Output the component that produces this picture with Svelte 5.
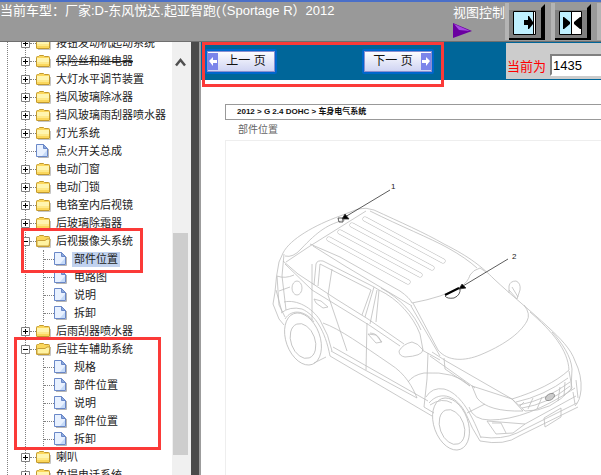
<script>
  let tree = $state([
    { name: "按钮发动机起动系统", folder: true },
    { name: "保险丝和继电器", folder: true, struck: true },
    { name: "大灯水平调节装置", folder: true },
    { name: "挡风玻璃除冰器", folder: true },
    { name: "挡风玻璃雨刮器喷水器", folder: true },
    { name: "灯光系统", folder: true },
    { name: "点火开关总成", folder: false },
    { name: "电动门窗", folder: true },
    { name: "电动门锁", folder: true },
    { name: "电铬室内后视镜", folder: true },
    { name: "后玻璃除霜器", folder: true },
    { name: "后视摄像头系统", folder: true, open: true, children: ["部件位置", "电路图", "说明", "拆卸"] },
    { name: "后雨刮器喷水器", folder: true },
    { name: "后驻车辅助系统", folder: true, open: true, children: ["规格", "部件位置", "说明", "部件位置", "拆卸"] },
    { name: "喇叭", folder: true },
    { name: "免提电话系统", folder: true },
  ]);

  let selected = $state("11-0");
  let page = $state("1435");

  // roof grooves: x1, y1, x2, y2
  const grooves = [
    [365, 219, 443, 261],
    [352, 225, 432, 268],
    [340, 232, 420, 275],
    [329, 239, 408, 282],
  ];

  function toggle(item) {
    item.open = !item.open;
  }

  function go(step) {
    page = String(Number(page) + step);
  }
</script>

{#snippet folderIcon(open)}
  <svg class="icon" width="15" height="14" viewBox="0 0 15 14" aria-hidden="true">
    <path d="M2 13.500h12.500V5" fill="none" stroke="#c4c4c4" />
    <path d="M.5 12V3.500q0-1 1-1h1l1-1h4l1 1h4q1 0 1 1V12q0 .5-.5.5H1q-.5 0-.5-.5z" fill="#fbd75c" stroke="#c39a2e" />
    {#if open}
      <path d="M1 12V7.500q0-1 1-1h7l2-1.500h3L13 12z" fill="#fff3a2" stroke="#c9a13a" />
    {:else}
      <path d="M1 4h12v4H1z" fill="#fff5b0" />
      <path d="M1 8h12v2H1z" fill="#fee98a" />
    {/if}
  </svg>
{/snippet}

{#snippet fileIcon()}
  <svg class="icon" width="15" height="14" viewBox="0 0 15 14" aria-hidden="true">
    <path d="M2 13.500h10.500V5" fill="none" stroke="#b5b5b5" />
    <path d="M.5.5h7l4 4v8H.5z" fill="#e8f1ff" stroke="#6a88c8" />
    <path d="M6 12L11 6v6z" fill="#c5daf8" />
    <path d="M7.500.5v4h4z" fill="#8ba9de" stroke="#6a88c8" />
  </svg>
{/snippet}

{#snippet bevel(kind)}
  <svg width="40" height="37" viewBox="0 0 40 37" aria-hidden="true">
    <path d="M0 0h40v37H0z" fill="#999" />
    <path d="M0 0h4v37H0z" fill="#b4b4b4" />
    <path d="M4 7h32v28H4z" fill="#808080" />
    <path d="M4 37v-2h32V5l4-4v36z" fill="#000" />
    <path d="M8.500 8.500h22v23h-22z" fill="#fff" stroke="#000" />
    {#if kind === "right"}
      <path d="M9 9h19v22H9z" fill="#bff0ff" />
      <path d="M28.500 9v22" stroke="#000" />
      <path d="M19 17h4v-4h1l4 6v2l-4 5h-1v-4h-4z" fill="#000" />
    {:else}
      <path d="M9 9h11v22H9z" fill="#bff0ff" />
      <path d="M20.500 9v22" stroke="#000" />
      <path d="M12 14h1l6 5v2l-6 5h-1zM30 14h-1l-6 5v2l6 5h1z" fill="#000" />
    {/if}
  </svg>
{/snippet}

<div class="page">
  <header>
    <h1>当前车型：厂家:D-东风悦达.起亚智跑(（Sportage R）2012</h1>
    <div class="tools">
      <div class="view">
        <span>视图控制</span>
        <svg width="20" height="15" viewBox="0 0 20 15" aria-hidden="true">
          <path d="M0 0L19 8L0 15z" fill="#6a00a0" />
          <path d="M1 1L17 8L6 7z" fill="#a64be0" />
        </svg>
      </div>
      <button aria-label="隐藏目录">{@render bevel("right")}</button>
      <button aria-label="平分窗口">{@render bevel("split")}</button>
      <button aria-label="显示目录">{@render bevel("split")}</button>
    </div>
  </header>

  <div class="body">
    <nav class="side">
      <ul class="root">
        {#each tree as item, i}
          <li>
            <div class="row">
              {#if item.folder}
                <button class="toggle" aria-label={item.name} onclick={() => toggle(item)}>
                  <svg width="9" height="9" viewBox="0 0 9 9" aria-hidden="true">
                    <path d="M.5.5h8v8h-8z" fill="#fff" stroke="#808080" />
                    <path d={item.open ? "M2 4.500h5" : "M2 4.500h5M4.500 2v5"} stroke="#000" />
                  </svg>
                </button>
              {/if}
              <span class="stub" class:short={item.folder}></span>
              {#if item.folder}
                {@render folderIcon(item.open)}
              {:else}
                {@render fileIcon()}
              {/if}
              <a href="#{i}" class:struck={item.struck}>{item.name}</a>
            </div>
            {#if item.open && item.children}
              <ul>
                {#each item.children as child, j}
                  <li class="row">
                    <span class="stub"></span>
                    {@render fileIcon()}
                    <a
                      href="#{i}-{j}"
                      class:selected={selected === `${i}-${j}`}
                      onclick={() => (selected = `${i}-${j}`)}>{child}</a>
                  </li>
                {/each}
              </ul>
            {/if}
          </li>
        {/each}
      </ul>
      <div class="scroll" aria-hidden="true">
        <div class="before">
          <svg class="up" width="11" height="9" viewBox="0 0 11 9">
            <path d="M1 7.500L5.500 2L10 7.500" fill="none" stroke="#505050" stroke-width="2.500" />
          </svg>
        </div>
        <div class="thumb"></div>
        <div class="after"></div>
      </div>
    </nav>

    <div class="splitter"></div>

    <main>
      <div class="bar">
        <div class="pager">
          <button onclick={() => go(-1)}>
            <svg width="10" height="17" viewBox="0 0 10 17" aria-hidden="true">
              <path d="M0 0h10v17H0z" fill="#7b85ea" />
              <path d="M1 8l4-4v3h4v3H5v3z" fill="#fff" />
            </svg>
            <span>上一 页</span>
          </button>
          <button onclick={() => go(1)}>
            <span>下一 页</span>
            <svg width="10" height="17" viewBox="0 0 10 17" aria-hidden="true">
              <path d="M0 0h10v17H0z" fill="#7b85ea" />
              <path d="M9 8L5 4v3H1v3h4v3z" fill="#fff" />
            </svg>
          </button>
        </div>
        <div class="jump">
          <label for="page">当前为</label>
          <input id="page" type="text" bind:value={page} />
        </div>
      </div>

      <article>
        <div class="crumbs">2012 &gt; G 2.4 DOHC &gt; 车身电气系统</div>
        <h2>部件位置</h2>
        <figure>
          <svg width="375" height="334" viewBox="226 141 375 334" role="img" aria-label="部件位置">
            <g class="car">
              <!-- roof -->
              <path d="M283 253C290 239 315 225 340 216L358 209Q366 207 374 210C400 222 425 233 444 244C470 257 482 267 494 279C510 294 532 312 548 327" />
              <path d="M285 256Q293 258 301 249C318 231 328 224 345 220M286 262L310 246L366 211M370 211C400 226 430 238 448 248Q466 258 477 268" />
              <path d="M310 244L340 257L400 291Q410 298 412 303M313 246L345 266L412 306" />
              <path d="M412 303Q428 300 440 296C458 289 467 285 470 275Q473 270 480 268L486 272" />
              {#each grooves as [x1, y1, x2, y2]}
                <line class="slot" {x1} {y1} {x2} {y2} />
                <line class="slot-in" {x1} {y1} {x2} {y2} />
              {/each}
              <!-- windscreen and bonnet -->
              <path d="M411 306L440 356M413 303L438 350C448 362 465 361 480 355C502 346 520 334 527 321Q531 314 524 305" />
              <path d="M432 352L446 361L512 399C535 392 556 382 569 370C568 350 552 331 530 312M444 358L445 369L470 386M430 356L475 388" />
              <path d="M548 327C560 338 571 349 575 361Q582 375 581 390Q580 401 575 406M552 332C562 343 571 356 572 369L571 390" />
              <!-- rear end -->
              <path d="M283 253L279 262Q276 276 275 292L273 304L279 319L284 325M284 254L282 276L286 310M277 276L279 305L285 317M277 276Q285 279 294 275M279 291L290 287M276 290L282 312" />
              <ellipse cx="297" cy="288" rx="5" ry="7" />
              <!-- side windows and doors -->
              <path d="M283 261L298 274L336 299L368 319L404 344M285 264L312 290L369 325L400 346M422 350L440 360" />
              <path d="M314 285L316 264Q317 260 323 261L374 287L365 317M318 286L320 264L371 290L362 315M332 269L328 295M312 264V320" />
              <path d="M377 290L370 324M374 287L379 290L376 322M379 290C398 299 413 316 420 334L423 350M381 288C401 299 414 314 421 330" />
              <path d="M367 323L366 370M328 295L347 351M323 323C340 329 362 345 390 364C406 374 413 388 417 398M428 353Q428 378 424 407M408 382Q413 375 424 373" />
              <path d="M314 299l7 2l7 6l-5 1l-7-5zM368 334l8 1l6 7l-6 1zM370 333q8 0 11 9" />
              <path d="M399 351Q403 344 412 342Q418 343 423 350Q422 356 405 357Q399 356 399 351z" />
              <path d="M509 293V286Q510 281 516 281Q521 283 520 290L517 299L509 290M512 287l6 10" />
              <!-- sills -->
              <path d="M330 356L432 416M331 351L365 370L417 398M333 347L428 401M326 357L314 363M424 407L434 413" />
              <!-- rear wheel -->
              <path d="M284 302C297 299 312 308 320 320Q329 335 332 351M281 313Q290 306 302 309C315 315 325 330 330 356M285 319C292 308 306 311 314 322" />
              <ellipse cx="303" cy="339" rx="17" ry="27" transform="rotate(-20 303 339)" />
              <ellipse cx="303" cy="341" rx="12" ry="18" transform="rotate(-20 303 341)" />
              <!-- front wheel -->
              <path d="M424 373Q456 371 470 386M426 397Q432 387 444 389C459 393 470 410 481 438M429 403C441 389 458 397 466 414Q472 429 480 441M430 405Q442 397 452 403" />
              <ellipse cx="451" cy="424" rx="17" ry="27" transform="rotate(-20 451 424)" />
              <ellipse cx="452" cy="427" rx="12" ry="18" transform="rotate(-20 452 427)" />
              <!-- front end -->
              <path d="M472 386L512 399L523 411Q488 412 477 398zM467 413L485 404M469 407Q473 420 490 420Q527 420 575 388" />
              <path d="M512 399L525 411Q551 412 572 388L569 371M516 402Q544 396 568 378M519 405Q546 400 570 382M522 408Q548 404 570 386" />
              <path d="M487 421L525 424L513 433L496 434zM492 423h9l5 10M525 424L576 396M481 437Q502 440 517 433L577 403M480 441Q505 446 519 436L578 407" />
              <path d="M544 418L545 427L561 417V408z" />
              <ellipse class="badge" cx="550" cy="397" rx="5" ry="3" transform="rotate(-30 550 397)" />
              <path d="M520 406l4-4M528 409l5-11M537 409l5-12M558 401l2-14M564 396l1-14M573 392l2 12M576 380l2 18" />
            </g>
            <g class="callout">
              <path d="M390 190L345 217M508 259L463 286" />
              <path class="solid" d="M342 219l3-5l4 5zM459 289l3-5l4 4z" />
              <path d="M338 218h5v4h-4zM445 296Q447 299 454 298Q461 295 460 288" />
              <path class="thick" d="M445 295L459 288" />
              <text x="391" y="189">1</text>
              <text x="512" y="259">2</text>
            </g>
          </svg>
        </figure>
      </article>
    </main>
  </div>

  <div class="mark camera"></div>
  <div class="mark parking"></div>
  <div class="mark paging"></div>
</div>

<style>
  :global(body) {
    background: #fff;
  }

  .page {
    position: relative;
    display: flex;
    flex-direction: column;
    height: 100vh;
    overflow: hidden;
    font-family: "Liberation Sans", Arial, "Noto Sans CJK SC", sans-serif;
    color: #222;
  }

  button {
    padding: 0;
    border: 0;
    background: none;
    font-family: inherit;
    cursor: pointer;
  }

  svg {
    display: block;
    flex: none;
  }

  header {
    display: flex;
    flex: none;
    box-sizing: border-box;
    height: 42px;
    border-top: 2px solid #4a6fc8;
    border-bottom: 1px solid #6f6f6f;
    background: #999;
    color: #fff;
    overflow: hidden;
  }

  h1 {
    flex: 1;
    min-width: 0;
    margin: 0;
    font-size: 13px;
    font-weight: 400;
    line-height: 18px;
    white-space: nowrap;
  }

  .tools {
    display: flex;
    flex: 0 0 148px;
    gap: 6px;
    overflow: hidden;
  }

  .tools button {
    flex: none;
    height: 37px;
    margin-top: 1px;
  }

  .view {
    flex: none;
    width: 46px;
    font-size: 13px;
    line-height: 21px;
    white-space: nowrap;
  }

  .body {
    display: flex;
    flex: 1;
    min-height: 0;
  }

  .side {
    display: flex;
    flex: 0 0 191px;
    overflow: hidden;
    background: repeating-linear-gradient(#808080 0 1px, #fff 1px 2px) 7px 0 / 1px 100% no-repeat;
  }

  ul {
    margin: 0 0 0 17px;
    padding: 0;
    border-left: 1px dotted #808080;
    list-style: none;
  }

  .root {
    flex: 1;
    margin: -8px 0 0 25px;
  }

  .row {
    display: flex;
    align-items: center;
    height: 18px;
  }

  .toggle {
    flex: none;
    margin-left: -5px;
  }

  .stub {
    flex: none;
    width: 10px;
    border-top: 1px dotted #808080;
  }

  .stub.short {
    width: 6px;
  }

  .icon {
    margin-right: 3px;
  }

  .row a {
    padding: 0 2px;
    color: #222;
    font-size: 11px;
    line-height: 15px;
    text-decoration: none;
    white-space: nowrap;
  }

  .row a.struck {
    text-decoration: line-through;
  }

  .row a.selected {
    background: #c1d2ee;
  }

  .scroll {
    display: flex;
    flex: 0 0 19px;
    flex-direction: column;
    background: #f0f0f0;
  }

  .before {
    display: flex;
    flex: 191 0 0;
    align-items: flex-start;
  }

  .up {
    margin: 16px 0 0 3px;
  }

  .thumb {
    flex: 222 0 0;
    margin: 0 3px 0 1px;
    background: #cdcdcd;
  }

  .after {
    flex: 20 0 0;
  }

  .splitter {
    flex: 0 0 8px;
    border-right: 2px solid #9c9c9c;
    background: #4b4b4b;
  }

  main {
    flex: 1;
    min-width: 0;
    overflow: hidden;
  }

  .bar {
    display: flex;
    height: 38px;
    background: #069;
  }

  .pager {
    display: flex;
    flex: 1;
    align-items: center;
    justify-content: space-between;
    padding: 0 72px 0 4px;
  }

  .pager button {
    display: flex;
    align-items: center;
    box-sizing: border-box;
    width: 72px;
    height: 25px;
    padding: 2px 1px;
    border: 2px solid #06c;
    border-radius: 2px;
    background: linear-gradient(#fff, #cdd2f2);
    box-shadow: inset 0 0 0 1px #8a8fd0;
    color: #111;
    font-size: 12px;
    line-height: 16px;
  }

  .pager span {
    flex: 1;
    text-align: center;
    white-space: nowrap;
  }

  .jump {
    display: flex;
    flex: 0 0 95px;
    align-items: center;
    gap: 4px;
    box-sizing: border-box;
    margin: 1px 0;
    padding: 8px 0 0 1px;
    background: #ccc;
    overflow: hidden;
  }

  .jump label {
    flex: none;
    color: #f00;
    font-size: 13px;
  }

  .jump input {
    flex: none;
    box-sizing: border-box;
    width: 60px;
    height: 22px;
    padding: 0 1px;
    border: 2px solid #fff;
    border-top-color: #808080;
    border-left-color: #808080;
    border-radius: 0;
    background: #fff;
    color: #000;
    font-family: inherit;
    font-size: 13px;
  }

  article {
    padding: 24px 0 0 24px;
  }

  .crumbs {
    padding-left: 11px;
    border: 1px solid #999;
    border-right: 0;
    color: #111;
    font-size: 8px;
    font-weight: 700;
    line-height: 14px;
  }

  h2 {
    margin: 0;
    padding-left: 13px;
    color: #666;
    font-size: 10px;
    font-weight: 400;
    line-height: 20px;
  }

  figure {
    margin: 0;
    border-top: 1px solid #eee;
    border-left: 1px solid #eee;
  }

  .car {
    fill: none;
    stroke: #bdbdbd;
    stroke-width: 0.8;
  }

  .slot {
    stroke-width: 5;
    stroke-linecap: round;
  }

  .slot-in {
    stroke: #fff;
    stroke-width: 4;
    stroke-linecap: round;
  }

  .badge {
    fill: #ccc;
    stroke: #888;
  }

  .callout {
    fill: none;
    stroke: #333;
    stroke-width: 0.8;
  }

  .callout .solid {
    fill: #000;
  }

  .callout .thick {
    stroke: #000;
    stroke-width: 2;
  }

  .callout text {
    fill: #222;
    stroke: none;
    font-size: 8px;
  }

  .mark {
    position: absolute;
    box-sizing: border-box;
    border: 3px solid #fb3a38;
    pointer-events: none;
  }

  .camera {
    top: 228px;
    left: 21px;
    width: 122px;
    height: 45px;
  }

  .parking {
    top: 337px;
    left: 14px;
    width: 147px;
    height: 113px;
  }

  .paging {
    top: 42px;
    left: 202px;
    width: 242px;
    height: 45px;
  }
</style>
